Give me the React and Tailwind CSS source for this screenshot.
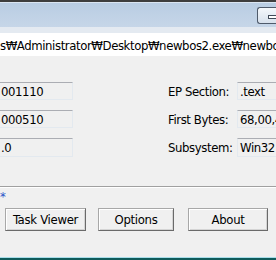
import React from "react";

const font = { fontFamily: '"DejaVu Sans Condensed", "DejaVu Sans", Tahoma, sans-serif' };

function Field({ children, className = "" }) {
  return (
    <div
      className={
        "h-[18px] bg-[#f0f0f0] border-t border-t-[#abadb3] border-b border-b-[#e3e9ef] flex items-center text-[13px] tracking-[-0.4px] leading-none whitespace-nowrap overflow-hidden " +
        className
      }
    >
      {children}
    </div>
  );
}

function Btn({ children, className = "" }) {
  return (
    <button
      className={
        "h-[23px] bg-[#f0f0f0] border border-t-[#a8a8a8] border-l-[#a8a8a8] border-r-[#6a6a6a] border-b-[#6a6a6a] shadow-[inset_1px_1px_0_#ffffff,inset_-1px_-1px_0_#d4d4d4] text-[13px] tracking-[-0.3px] leading-none text-black flex items-center justify-center " +
        className
      }
      style={font}
    >
      {children}
    </button>
  );
}

export default function App() {
  return (
    <div className="w-[276px] h-[260px] overflow-hidden bg-[#f0f0f0] flex flex-col text-black" style={font}>
      <div className="h-[2px] bg-[#3e3e3e]" />
      <div className="h-[1px] bg-[#dbe6f2]" />
      <div className="h-[24px] bg-gradient-to-b from-[#b9cde3] to-[#c6d6e8] flex justify-end items-start pt-[4px]">
        <div className="w-[19px] h-[17px] rounded-l-[3px] border border-r-0 border-[#4f5b6b] bg-gradient-to-b from-[#f4f7fb] to-[#d7e1ec] flex items-center justify-end pt-[3px]">
          <div className="w-[8px] h-[4px] border border-r-0 border-[#404a58] bg-white" />
        </div>
      </div>
      <div className="h-[6px] bg-[#e4eaf1]" />
      <div className="h-[23px] bg-white flex items-center text-[13px] tracking-[-0.4px] leading-none whitespace-nowrap overflow-hidden pt-[2px]">
        s₩Administrator₩Desktop₩newbos2.exe₩newbos2.exe
      </div>
      <div className="flex mt-[26px]">
        <div className="w-[73px] flex flex-col gap-[10px]">
          <Field className="border-r border-r-[#e3e9ef] pl-[1px]">001110</Field>
          <Field className="border-r border-r-[#e3e9ef] pl-[1px]">000510</Field>
          <Field className="border-r border-r-[#e3e9ef] pl-[1px] h-[19px]">.0</Field>
        </div>
        <div className="w-[95px]" />
        <div className="flex flex-col gap-[10px] text-[13px] tracking-[-0.4px] leading-none">
          <div className="h-[18px] flex items-center whitespace-nowrap">EP Section:</div>
          <div className="h-[18px] flex items-center whitespace-nowrap">First Bytes:</div>
          <div className="h-[19px] flex items-center whitespace-nowrap">Subsystem:</div>
        </div>
        <div className="flex-1" />
        <div className="w-[39px] flex flex-col gap-[10px] shrink-0">
          <Field className="border-l border-l-[#e3e9ef] pl-[2px]">.text</Field>
          <Field className="border-l border-l-[#e3e9ef] pl-[2px]">68,00,40,00</Field>
          <Field className="border-l border-l-[#e3e9ef] pl-[2px] h-[19px]">Win32 GUI</Field>
        </div>
      </div>
      <div className="mt-[29px] h-[1px] bg-[#a0a0a0]" />
      <div className="h-[1px] bg-white" />
      <div className="h-[10px] text-[13px] leading-none text-[#2a54c8] pt-[2px]">*</div>
      <div className="flex mt-[10px]">
        <Btn className="ml-[5px] w-[81px]">Task Viewer</Btn>
        <Btn className="ml-[12px] w-[76px]">Options</Btn>
        <Btn className="ml-[14px] w-[80px]">About</Btn>
      </div>
      <div className="flex-1" />
      <div className="h-[1px] bg-[#a8dde9]" />
      <div className="h-[2px] bg-[#0f5b5b]" />
    </div>
  );
}
